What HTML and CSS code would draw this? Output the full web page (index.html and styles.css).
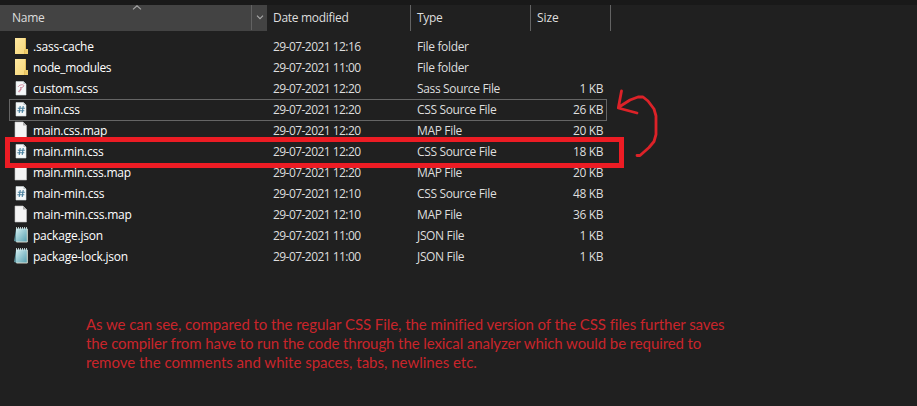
FILE: index.html
```html
<!DOCTYPE html>
<html lang="en">
<head>
<meta charset="utf-8">
<title>Files</title>
<link rel="stylesheet" href="styles.css">
</head>
<body>
<svg class="defs" width="0" height="0" aria-hidden="true">
  <defs>
    <linearGradient id="gold" x2="1" y2="1"><stop stop-color="#ffe9a2"/><stop offset="1" stop-color="#f5d575"/></linearGradient>
    <linearGradient id="teal" x2="1" y2="1"><stop stop-color="#d3eff1"/><stop offset="1" stop-color="#529dad"/></linearGradient>
    <symbol id="folder" viewBox="0 0 16 18">
      <path d="M2 1h11v11h2v5H2z" fill="url(#gold)"/>
      <path d="M12.5 1v11l-1 1v4" fill="none" stroke="#dfb957" stroke-width=".8"/>
      <path d="M12 12h2.6v5H12z" fill="#edcb69"/>
    </symbol>
    <symbol id="page" viewBox="0 0 16 18">
      <path d="M2 1h8l3.5 3.5V17H2z" fill="#f4f4f4" stroke="#c5c5c5" stroke-width=".6"/>
      <path d="M10 1v3.5h3.5z" fill="#aaa"/>
    </symbol>
    <symbol id="source" viewBox="0 0 16 18">
      <path d="M3 2.5h7.5L13 5v11H3z" fill="#f5f8f9" stroke="#d5dddf" stroke-width=".6"/>
      <path d="M10.5 2.5V5H13z" fill="#b5bec1"/>
    </symbol>
    <symbol id="css" viewBox="0 0 16 18">
      <use href="#source"/>
      <path d="M7.2 6L6.2 13M10.2 6L9.2 13M4.8 8.2h7M4.3 10.8h7" stroke="#487f9d" stroke-width="1.1"/>
    </symbol>
    <symbol id="sass" viewBox="0 0 16 18">
      <use href="#source"/>
      <path d="M5.2 8c.3-2 5.5-3.2 5.6-1.3.1 1.3-2.6 2.2-3.8 2.2 2 .2.8 2.2-.2 3.6-.8 1-1.8.3-.8-.8l2.3-1.8" fill="none" stroke="#d0869b" stroke-width="1"/>
    </symbol>
    <symbol id="note" viewBox="0 0 16 18">
      <path d="M3 3L1 15l3 1z" fill="#61949d"/>
      <path d="M3 2.5h11.5V16H3z" fill="url(#teal)"/>
      <path d="M14.3 3v13H3.500" fill="none" stroke="#e4e3d5" stroke-width=".9"/>
      <path d="M3.5 1v2.4m2-2.4v2.4m2-2.4v2.4m2-2.4v2.4m2-2.4v2.4m2-2.4v2.4" stroke="#dceff0" stroke-width=".8"/>
    </symbol>
  </defs>
</svg>
<main class="explorer">
  <header class="columns">
    <div class="heading heading-name"><span>Name</span>
      <svg class="sort" width="10" height="5" viewBox="0 0 10 5"><path d="M1 4.3L5 .8l4 3.5"/></svg>
      <div class="dropdown"><svg width="8" height="5" viewBox="0 0 8 5"><path d="M1 .7l3 3 3-3"/></svg></div>
    </div>
    <div class="heading heading-date">Date modified</div>
    <div class="heading heading-type">Type</div>
    <div class="heading heading-size">Size</div>
  </header>
  <section class="files">
    <div class="row"><svg class="icon"><use href="#folder"/></svg><span class="name">.sass-cache</span><span class="date">29-07-2021 12:16</span><span class="type">File folder</span><span class="size"></span></div>
    <div class="row"><svg class="icon"><use href="#folder"/></svg><span class="name name-tight">node_modules</span><span class="date">29-07-2021 11:00</span><span class="type">File folder</span><span class="size"></span></div>
    <div class="row"><svg class="icon"><use href="#sass"/></svg><span class="name">custom.scss</span><span class="date">29-07-2021 12:20</span><span class="type">Sass Source File</span><span class="size">1 KB</span></div>
    <div class="row focused"><svg class="icon"><use href="#css"/></svg><span class="name">main.css</span><span class="date">29-07-2021 12:20</span><span class="type">CSS Source File</span><span class="size">26 KB</span></div>
    <div class="row"><svg class="icon"><use href="#page"/></svg><span class="name">main.css.map</span><span class="date">29-07-2021 12:20</span><span class="type">MAP File</span><span class="size">20 KB</span></div>
    <div class="row marked"><svg class="icon"><use href="#css"/></svg><span class="name">main.min.css</span><span class="date">29-07-2021 12:20</span><span class="type">CSS Source File</span><span class="size">18 KB</span></div>
    <div class="row"><svg class="icon"><use href="#page"/></svg><span class="name">main.min.css.map</span><span class="date">29-07-2021 12:20</span><span class="type">MAP File</span><span class="size">20 KB</span></div>
    <div class="row"><svg class="icon"><use href="#css"/></svg><span class="name">main-min.css</span><span class="date">29-07-2021 12:10</span><span class="type">CSS Source File</span><span class="size">48 KB</span></div>
    <div class="row"><svg class="icon"><use href="#page"/></svg><span class="name">main-min.css.map</span><span class="date">29-07-2021 12:10</span><span class="type">MAP File</span><span class="size">36 KB</span></div>
    <div class="row"><svg class="icon"><use href="#note"/></svg><span class="name">package.json</span><span class="date">29-07-2021 11:00</span><span class="type">JSON File</span><span class="size">1 KB</span></div>
    <div class="row"><svg class="icon"><use href="#note"/></svg><span class="name">package-lock.json</span><span class="date">29-07-2021 11:00</span><span class="type">JSON File</span><span class="size">1 KB</span></div>
  </section>
  <p class="caption"><span class="line line-1">As we can see, compared to the regular CSS File, the minified version of the CSS files further saves</span><span class="line line-2">the compiler from have to run the code through the lexical analyzer which would be required to</span><span class="line line-3">remove the comments and white spaces, tabs, newlines etc.</span></p>
  <svg class="arrow" width="50" height="75" viewBox="610 85 50 75"><path d="M637 155.5h3l9-8 5-6 2-7V116l-2-7-6-8-5-4h-5l-8 3-11 7M621.500 91l-3.200 17L637 113"/></svg>
</main>
</body>
</html>
```
FILE: styles.css
```css
*, *::after { box-sizing: border-box; }
body {
  margin: 0;
  background: #202020;
  font: 12px/21px "Open Sans", "Noto Sans", sans-serif;
  color: #dedede;
}
.defs { position: absolute; }
.explorer {
  position: relative;
  height: 406px;
  overflow: hidden;
  border-top: 5px solid #191919;
}
.columns {
  display: grid;
  grid-template-columns: 267px 144px 120px 80px;
  height: 25px;
  line-height: 26px;
}
.heading {
  position: relative;
  padding-left: 6px;
  border-right: 1px solid #636363;
  white-space: nowrap;
  letter-spacing: -0.3px;
}
.heading-size { letter-spacing: -0.1px; }
.heading-name {
  padding-left: 12px;
  border-right: 0;
  background: #434343;
  letter-spacing: -0.25px;
}
.sort { position: absolute; left: 132px; top: 0; }
.sort path, .dropdown path { fill: none; stroke: #aaa; stroke-width: 1.1; }
.dropdown {
  position: absolute;
  right: 0;
  top: 0;
  width: 16px;
  height: 25px;
  border-left: 1px solid #626262;
  display: flex;
  align-items: center;
  justify-content: center;
}
.files { padding-top: 6px; }
.row {
  position: relative;
  display: grid;
  grid-template-columns: 20px 240px 144px 120px 66px;
  height: 21px;
  padding-left: 13px;
  line-height: 22px;
  white-space: nowrap;
}
.icon { width: 16px; height: 18px; margin-top: 1px; }
.name { color: #fff; letter-spacing: -0.22px; }
.name-tight { letter-spacing: -0.35px; }
.date { letter-spacing: -0.55px; }
.type { letter-spacing: -0.34px; }
.size { text-align: right; letter-spacing: -0.4px; }
.focused::after {
  content: "";
  position: absolute;
  left: 9px;
  top: 0;
  width: 598px;
  height: 22px;
  border: 1px solid #656565;
}
.marked::after {
  content: "";
  position: absolute;
  z-index: 1;
  left: 5px;
  top: -4px;
  width: 619px;
  height: 31px;
  border: 5px solid #ed1c24;
}
.caption {
  margin: 48px 0 0 86px;
  font: 15px/19px Lato, sans-serif;
  color: #c9252b;
}
.line { display: block; white-space: nowrap; }
.line-1 { letter-spacing: -0.065px; }
.line-2 { letter-spacing: -0.095px; }
.arrow { position: absolute; left: 610px; top: 80px; }
.arrow path {
  fill: none;
  stroke: #dc2228;
  stroke-width: 2.8;
  stroke-linecap: round;
  stroke-linejoin: round;
}
```
